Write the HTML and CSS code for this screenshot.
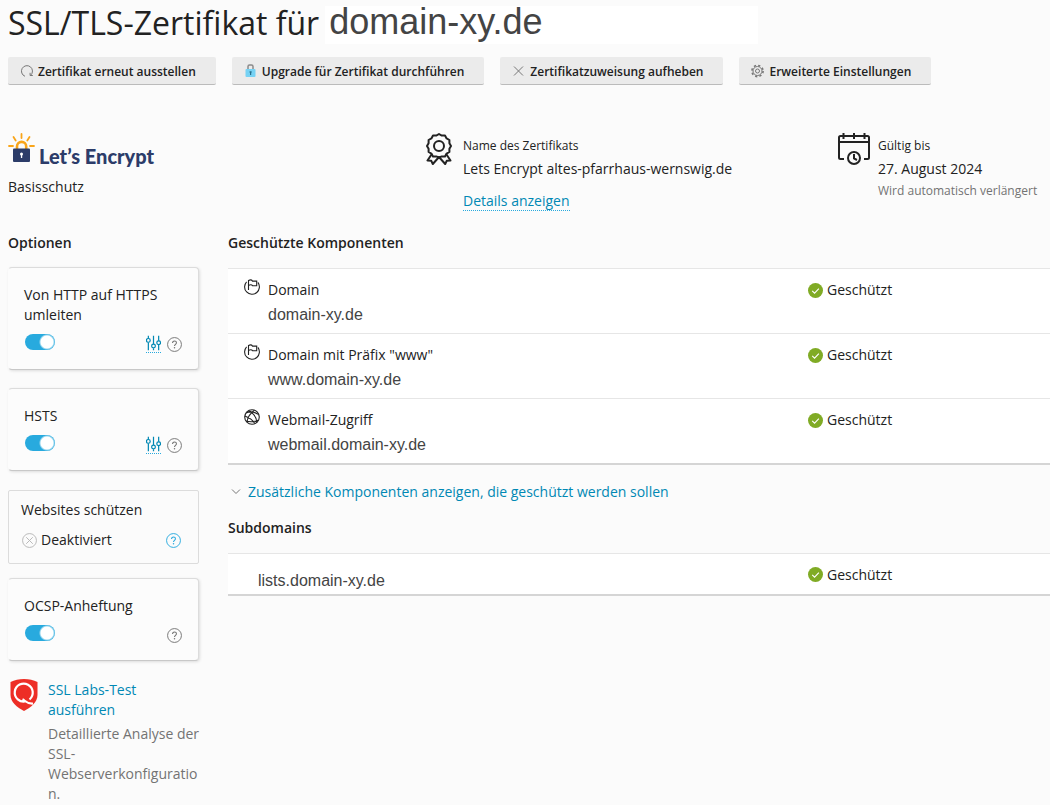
FILE: index.html
```html
<!DOCTYPE html>
<html lang="de">
<head>
<meta charset="utf-8">
<meta name="viewport" content="width=device-width, initial-scale=1">
<title>SSL/TLS-Zertifikat für domain-xy.de</title>
<link rel="stylesheet" href="styles.css">
</head>
<body>
<svg class="sprite" aria-hidden="true">
  <symbol id="help" viewBox="0 0 16 16">
    <circle cx="8" cy="8" r="7.4" fill="none" stroke="currentColor"/>
    <path d="M5.9 6.4c0-1.400.9-2.200 2.100-2.200s2.100.8 2.100 2c0 1.500-2.100 1.700-2.100 3.300" fill="none" stroke="currentColor" stroke-width="1.100"/>
    <circle cx="8" cy="11.400" r=".8" fill="currentColor"/>
  </symbol>
  <symbol id="sliders" viewBox="0 0 16 16">
    <g fill="none" stroke="currentColor" stroke-width="1.300">
      <path d="M2.500 0v3M2.500 7.500V16M8 0v9M8 13.500V16M13.500 0v5.500M13.500 10v6"/>
      <circle cx="2.500" cy="5.200" r="2"/><circle cx="8" cy="11.300" r="2"/><circle cx="13.500" cy="7.800" r="2"/>
    </g>
  </symbol>
  <symbol id="ok" viewBox="0 0 16 16">
    <circle cx="8" cy="8" r="8" fill="#80ab25"/>
    <path d="M4.500 8.300 7 10.800l4.600-4.900" fill="none" stroke="#fff" stroke-width="1.200"/>
  </symbol>
  <symbol id="flag" viewBox="0 0 16 16">
    <g fill="none" stroke="currentColor" stroke-width="1.100">
      <path d="M2.600 2.800A7.400 7.400 0 1 0 13.900 3.400"/>
      <path d="M4.500 11V1M4.500 1.500c2-1 3.300-.6 4 .6h4.200v4.700H8.700c-.9-1.200-2.200-1.400-4.200-.4"/>
    </g>
  </symbol>
  <symbol id="globe" viewBox="0 0 16 16">
    <g fill="none" stroke="currentColor" stroke-width="1.100">
      <circle cx="8" cy="8" r="7.300"/>
      <path d="M4.500 1.700C9.500 4 12.500 8.500 12.800 13.500M10.500 1.300C6 4.500 3.500 8 3 13M.8 7c4 1.500 8.500 5 10 7.500M2 12c4 1.200 9 .8 12.500-1M2 4c3-1.500 8-1.200 12 1.200"/>
    </g>
  </symbol>
</svg>

<header class="title">
  <h1>SSL/TLS-Zertifikat für</h1>
  <span class="title-domain">domain-xy.de</span>
</header>

<div class="toolbar">
  <button type="button" class="tool">
    <svg class="tool-icon" viewBox="0 0 14 14" aria-hidden="true"><path d="M5 12.300A5.500 5.500 0 1 1 10.700 11.200M12.800 11.500h-2.700V8.800" fill="none" stroke="#777"/></svg>
    <span>Zertifikat erneut ausstellen</span>
  </button>
  <button type="button" class="tool">
    <svg class="tool-icon" viewBox="0 0 14 14" aria-hidden="true"><path d="M4 6V2.500Q4 1 5.500 1h2Q9 1 9 2.500V6" fill="none" stroke="#8b8b8b" stroke-width="1.500"/><rect x="1.500" y="5" width="10" height="8" rx="1" fill="#76d2f4"/><path d="M5.600 7.200h2v1.500h-.4V11H6V8.700h-.4z" fill="#28708e"/></svg>
    <span>Upgrade für Zertifikat durchführen</span>
  </button>
  <button type="button" class="tool">
    <svg class="tool-icon" viewBox="0 0 14 14" aria-hidden="true"><path d="M2 2.500l9 9M11 2.500l-9 9" stroke="#777"/></svg>
    <span>Zertifikatzuweisung aufheben</span>
  </button>
  <button type="button" class="tool">
    <svg class="tool-icon" viewBox="0 0 14 14" aria-hidden="true"><g fill="none" stroke="#777"><circle cx="6.500" cy="7" r="5.600" stroke-width="1.600" stroke-dasharray="2.200 2.200"/><circle cx="6.500" cy="7" r="4.500"/><circle cx="6.500" cy="7" r="2"/></g></svg>
    <span>Erweiterte Einstellungen</span>
  </button>
</div>

<section class="summary">
  <div>
    <div class="brand">
      <svg class="brand-mark" viewBox="0 0 28 30" aria-hidden="true">
        <path d="M13.500 1v4M5.500 4l2.200 3.500M21.500 4l-2.200 3.500M1 13h4M22 13h4" stroke="#f9a51a" stroke-width="1.800" stroke-linecap="round" fill="none"/>
        <path d="M9 16v-2.500a4.600 4.600 0 0 1 9.200 0V16" stroke="#f9a51a" stroke-width="2.600" fill="none"/>
        <rect x="5" y="15.500" width="17" height="13.500" rx="1" fill="#2c3c69"/>
        <circle cx="13.500" cy="21" r="1.500" fill="#fff"/><path d="M12.900 21h1.300v4h-1.300z" fill="#fff"/>
      </svg>
      <span class="brand-name">Let’s Encrypt</span>
    </div>
    <p>Basisschutz</p>
  </div>
  <div class="fact">
    <svg class="fact-icon" viewBox="0 0 32 32" aria-hidden="true"><g fill="none" stroke="#222" stroke-width="2" stroke-linejoin="round"><path d="M16 1l2.800 1.600 3.200 0 1.600 2.800 2.800 1.600 0 3.200L28 13l-1.600 2.800 0 3.200-2.800 1.600L22 23.400l-3.200 0L16 24.500l-2.800-1.100-3.200 0-1.600-2.800-2.800-1.600 0-3.200L4 13l1.600-2.800 0-3.200 2.800-1.600L10 2.600l3.200 0z"/><circle cx="16" cy="13" r="5"/><path d="M8.500 21.500l-4 6 3.800.3 1.500 3.200L16 24l6.200 7 1.500-3.200 3.800-.3-4-6"/></g></svg>
    <div>
      <p class="small">Name des Zertifikats</p>
      <p>Lets Encrypt altes-pfarrhaus-wernswig.de</p>
      <a class="details" href="#details">Details anzeigen</a>
    </div>
  </div>
  <div class="fact">
    <svg class="fact-icon" viewBox="0 0 32 32" aria-hidden="true"><g fill="none" stroke="#222" stroke-width="2"><path d="M6 26H2.500Q1 26 1 24.500V4.500Q1 3 2.500 3h27Q31 3 31 4.500v20Q31 26 29.500 26H26M1 9h30M5.500 0v6M16 0v6M26.500 0v6"/><circle cx="16" cy="25" r="6"/><path d="M16 21v4.500l3 1.500"/></g></svg>
    <div>
      <p class="small">Gültig bis</p>
      <p>27. August 2024</p>
      <p class="note">Wird automatisch verlängert</p>
    </div>
  </div>
</section>

<main class="columns">
  <aside class="options">
    <h2>Optionen</h2>
    <div class="cards">
      <div class="card">
        <label for="https">Von HTTP auf HTTPS umleiten</label>
        <div class="controls">
          <input class="toggle" type="checkbox" id="https" checked>
          <a class="adjust" href="#https-settings" aria-label="Einstellungen"><svg viewBox="0 0 16 16"><use href="#sliders"/></svg></a>
          <button type="button" class="help" aria-label="Hilfe"><svg viewBox="0 0 16 16"><use href="#help"/></svg></button>
        </div>
      </div>
      <div class="card">
        <label for="hsts">HSTS</label>
        <div class="controls">
          <input class="toggle" type="checkbox" id="hsts" checked>
          <a class="adjust" href="#hsts-settings" aria-label="Einstellungen"><svg viewBox="0 0 16 16"><use href="#sliders"/></svg></a>
          <button type="button" class="help" aria-label="Hilfe"><svg viewBox="0 0 16 16"><use href="#help"/></svg></button>
        </div>
      </div>
      <div class="card-flat">
        <p>Websites schützen</p>
        <div class="state">
          <svg class="off" viewBox="0 0 16 16" aria-hidden="true"><g fill="none" stroke="#b5b5b5"><circle cx="8" cy="8" r="7.400"/><path d="M4.500 4.500l7 7M11.500 4.500l-7 7"/></g></svg>
          <span>Deaktiviert</span>
          <button type="button" class="help help-active" aria-label="Hilfe"><svg viewBox="0 0 16 16"><use href="#help"/></svg></button>
        </div>
      </div>
      <div class="card">
        <label for="ocsp">OCSP-Anheftung</label>
        <div class="controls">
          <input class="toggle" type="checkbox" id="ocsp" checked>
          <button type="button" class="help" aria-label="Hilfe"><svg viewBox="0 0 16 16"><use href="#help"/></svg></button>
        </div>
      </div>
    </div>
    <div class="labs">
      <svg class="labs-icon" viewBox="0 0 32 32" aria-hidden="true"><path d="M16 0c5 0 9.500 1 13.500 3v13c0 7-6.500 12.500-13.500 16C9 28.500 2.500 23 2.500 16V3C6.500 1 11 0 16 0z" fill="#ed2e26"/><path d="M18 22.300A9 9 0 1 1 21.500 20.500M14.500 20.300c2.500 1 4 4.700 10.500 4.200" fill="none" stroke="#fff" stroke-width="2.200"/></svg>
      <div class="labs-text">
        <a href="#ssl-labs">SSL Labs-Test ausführen</a>
        <p class="labs-note">Detaillierte Analyse der SSL-Webserverkonfiguration.</p>
      </div>
    </div>
  </aside>

  <section class="components">
    <h2>Geschützte Komponenten</h2>
    <table class="list">
      <tr>
        <td><div class="entry"><svg class="entry-icon" viewBox="0 0 16 16"><use href="#flag"/></svg><div class="entry-text"><p>Domain</p><p class="host">domain-xy.de</p></div></div></td>
        <td class="status"><span class="badge"><svg viewBox="0 0 16 16"><use href="#ok"/></svg>Geschützt</span></td>
      </tr>
      <tr>
        <td><div class="entry"><svg class="entry-icon" viewBox="0 0 16 16"><use href="#flag"/></svg><div class="entry-text"><p>Domain mit Präfix "www"</p><p class="host">www.domain-xy.de</p></div></div></td>
        <td class="status"><span class="badge"><svg viewBox="0 0 16 16"><use href="#ok"/></svg>Geschützt</span></td>
      </tr>
      <tr>
        <td><div class="entry"><svg class="entry-icon" viewBox="0 0 16 16"><use href="#globe"/></svg><div class="entry-text"><p>Webmail-Zugriff</p><p class="host">webmail.domain-xy.de</p></div></div></td>
        <td class="status"><span class="badge"><svg viewBox="0 0 16 16"><use href="#ok"/></svg>Geschützt</span></td>
      </tr>
    </table>
    <a class="more" href="#more"><svg class="more-icon" viewBox="0 0 16 16" aria-hidden="true"><path d="M4 5.500l4 4 4-4" fill="none" stroke="#777"/></svg>Zusätzliche Komponenten anzeigen, die geschützt werden sollen</a>
    <h2>Subdomains</h2>
    <table class="list list-compact">
      <tr>
        <td class="sub"><p class="host">lists.domain-xy.de</p></td>
        <td class="status"><span class="badge"><svg viewBox="0 0 16 16"><use href="#ok"/></svg>Geschützt</span></td>
      </tr>
    </table>
  </section>
</main>
</body>
</html>
```

FILE: styles.css
```css
* {
  box-sizing: border-box;
}

body {
  margin: 0;
  padding-left: 8px;
  background: #fbfbfb;
  color: #222;
  font: 14px/20px "Open Sans", "Noto Sans", sans-serif;
}

p,
h1,
h2 {
  margin: 0;
}

a {
  color: #0088b4;
  text-decoration: none;
}

svg {
  display: block;
  flex: none;
}

button {
  font-family: inherit;
  color: inherit;
  cursor: pointer;
}

.sprite {
  position: absolute;
  width: 0;
  height: 0;
}

.title {
  display: flex;
  align-items: flex-start;
  padding-top: 6px;
}

h1 {
  font-size: 32px;
  line-height: 34px;
  font-weight: 400;
  white-space: nowrap;
}

.title-domain {
  width: 433px;
  margin-left: 6px;
  padding: 0 0 6px 4px;
  background: #fff;
  color: #444;
  font: 36px/32px "Liberation Sans", Arial, sans-serif;
}

.toolbar {
  display: flex;
  flex-wrap: wrap;
  gap: 16px;
  margin-top: 13px;
}

.tool {
  display: flex;
  align-items: center;
  gap: 4px;
  height: 28px;
  padding: 0 20px 0 12px;
  border: 0;
  border-bottom: 1px solid #bbb;
  border-radius: 2px;
  background: #ebebeb;
  font-size: 12px;
  font-weight: 600;
  white-space: nowrap;
}

.tool span {
  padding-top: 2px;
}

.tool-icon {
  width: 14px;
  height: 14px;
}

.summary {
  display: grid;
  grid-template-columns: 1fr 1fr 212px;
  margin-top: 48px;
  min-height: 100px;
}

.brand {
  display: flex;
  height: 32px;
  margin-bottom: 12px;
}

.brand-mark {
  width: 28px;
  height: 30px;
}

.brand-name {
  margin-left: 3px;
  padding-top: 12px;
  color: #2c3c69;
  font: 900 20px/22px Lato, sans-serif;
}

.fact {
  display: flex;
  gap: 8px;
}

.fact-icon {
  width: 32px;
  height: 32px;
}

.small {
  padding-top: 3px;
  margin-bottom: 3px;
  font-size: 12px;
}

.note {
  margin-top: 2px;
  color: #737373;
  font-size: 12px;
}

.details {
  display: inline-block;
  height: 20px;
  margin-top: 12px;
  border-bottom: 1px dotted #28aade;
}

.columns {
  display: grid;
  grid-template-columns: 191px minmax(0, 1fr);
  column-gap: 29px;
}

h2 {
  font-size: 14px;
  line-height: 20px;
  font-weight: 600;
}

.cards {
  display: grid;
  gap: 18px;
  margin-top: 14px;
}

.card {
  padding: 17px 16px 16px 15px;
  border: 1px solid #dcdcdc;
  border-left-color: transparent;
  border-bottom-color: #c8c8c8;
  border-radius: 4px;
  background: #fcfcfc;
  box-shadow: 1px 1px 3px rgba(0, 0, 0, 0.12);
}

.card label {
  display: block;
}

.controls {
  display: flex;
  gap: 6px;
  height: 20px;
  margin-top: 8px;
}

.toggle {
  appearance: none;
  width: 30px;
  height: 16px;
  margin: 1px auto 0 1px;
  border-radius: 8px;
  background: radial-gradient(circle at 22px 8px, #fff 6px, #28aade 8px);
}

.adjust {
  padding-top: 2px;
  height: 20px;
  border-bottom: 1px dotted #28aade;
}

.adjust svg {
  width: 15px;
  height: 16px;
}

.help {
  margin: 4px 0 0;
  padding: 0;
  border: 0;
  background: none;
  color: #737373;
  height: 15px;
}

.help svg {
  width: 15px;
  height: 15px;
}

.help-active {
  margin: 0 0 0 auto;
  color: #28aade;
}

.card-flat {
  margin-top: 1px;
  padding: 9px 17px 13px 12px;
  border: 1px solid #dcdcdc;
  border-radius: 2px;
}

.card-flat + .card {
  margin-top: -4px;
}

.state {
  display: flex;
  align-items: center;
  gap: 4px;
  margin-top: 10px;
}

.off {
  width: 15px;
  height: 15px;
  margin-left: 1px;
}

.labs {
  display: flex;
  gap: 8px;
  margin: 18px -2px 0 0;
}

.labs-icon {
  width: 32px;
  height: 32px;
}

.labs-text {
  min-width: 0;
  padding-top: 1px;
}

.labs-text a {
  display: block;
  max-width: 120px;
}

.labs-note {
  margin-top: 4px;
  color: #737373;
  overflow-wrap: anywhere;
}

.list {
  width: 100%;
  margin-top: 15px;
  border-collapse: collapse;
  border-bottom: 2px solid #d5d5d5;
  background: #fff;
}

.list td {
  height: 65px;
  padding: 10px 0 0 16px;
  border-top: 1px solid #e6e6e6;
  vertical-align: top;
}

.list .status {
  width: 242px;
  padding: 11px 0 0;
}

.entry {
  display: flex;
  gap: 8px;
}

.entry-icon {
  width: 16px;
  height: 16px;
}

.entry-text {
  padding-top: 1px;
}

.host {
  margin-top: 5px;
  color: #444;
  font: 16px/20px "Liberation Sans", Arial, sans-serif;
}

.badge {
  display: flex;
  align-items: center;
  gap: 4px;
}

.badge svg {
  width: 15px;
  height: 15px;
}

.more {
  display: flex;
  align-items: center;
  gap: 4px;
  margin: 17px 0 16px;
}

.more-icon {
  width: 16px;
  height: 16px;
}

.list-compact td {
  height: 42px;
}

.list-compact .sub {
  padding: 12px 0 0 30px;
}
```
